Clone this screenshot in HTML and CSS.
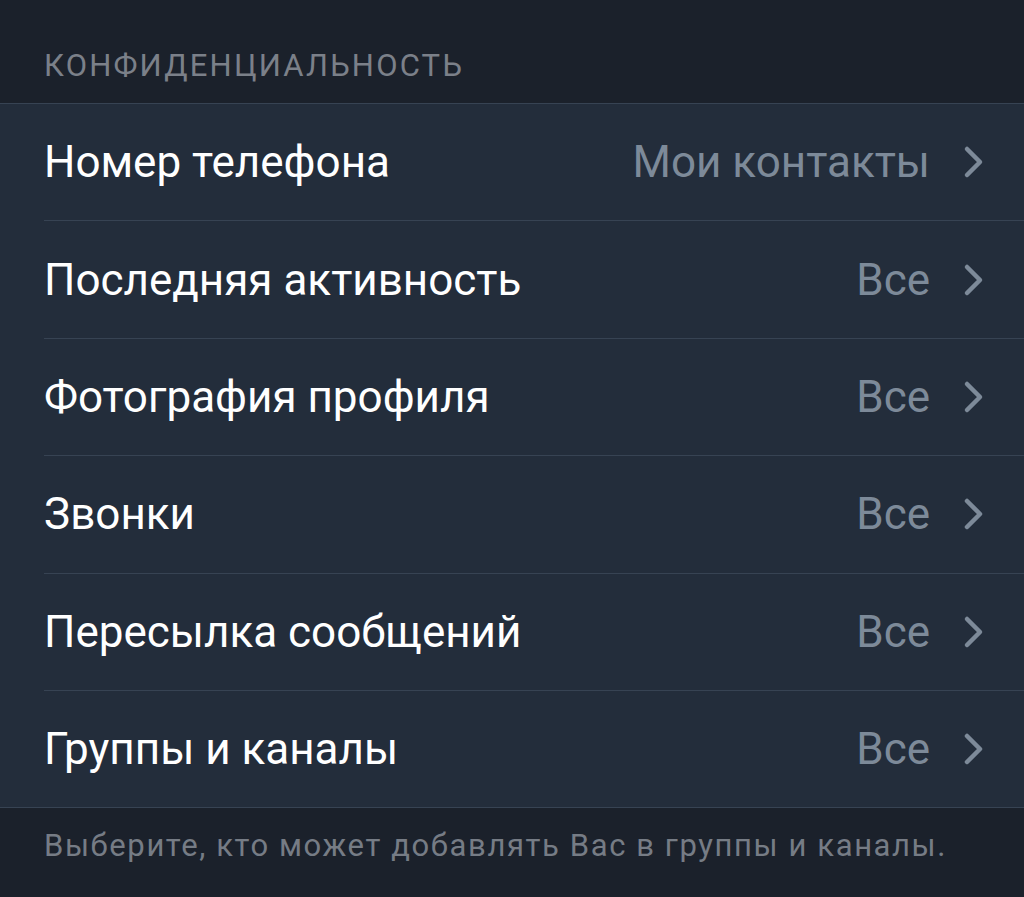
FILE: index.html
```html
<!DOCTYPE html>
<html lang="ru">
<head>
    <meta charset="UTF-8">
    <meta name="viewport" content="width=device-width, initial-scale=1.0">
    <title>Конфиденциальность</title>
    <link rel="stylesheet" href="styles.css">
</head>
<body>
    <div class="section-header">КОНФИДЕНЦИАЛЬНОСТЬ</div>
    <div class="list">
        <div class="row">
            <span class="title">Номер телефона</span>
            <span class="value">Мои контакты</span>
            <svg class="chevron" viewBox="0 0 24 34"><path d="M5 4 L18 17 L5 30"/></svg>
        </div>
        <div class="row">
            <span class="title">Последняя активность</span>
            <span class="value">Все</span>
            <svg class="chevron" viewBox="0 0 24 34"><path d="M5 4 L18 17 L5 30"/></svg>
        </div>
        <div class="row">
            <span class="title">Фотография профиля</span>
            <span class="value">Все</span>
            <svg class="chevron" viewBox="0 0 24 34"><path d="M5 4 L18 17 L5 30"/></svg>
        </div>
        <div class="row">
            <span class="title">Звонки</span>
            <span class="value">Все</span>
            <svg class="chevron" viewBox="0 0 24 34"><path d="M5 4 L18 17 L5 30"/></svg>
        </div>
        <div class="row">
            <span class="title">Пересылка сообщений</span>
            <span class="value">Все</span>
            <svg class="chevron" viewBox="0 0 24 34"><path d="M5 4 L18 17 L5 30"/></svg>
        </div>
        <div class="row">
            <span class="title">Группы и каналы</span>
            <span class="value">Все</span>
            <svg class="chevron" viewBox="0 0 24 34"><path d="M5 4 L18 17 L5 30"/></svg>
        </div>
    </div>
    <div class="section-footer">Выберите, кто может добавлять Вас в группы и каналы.</div>
</body>
</html>
```

FILE: styles.css
```css
html, body {
    margin: 0;
    padding: 0;
    background-color: #1b212b;
    font-family: Roboto, "Noto Sans", sans-serif;
}
.section-header {
    height: 104px;
    box-sizing: border-box;
    padding: 47px 0 0 44px;
    font-size: 31px;
    letter-spacing: 2.2px;
    color: #7b8089;
    border-bottom: 1px solid #374353;
}
.list {
    background-color: #232d3b;
    border-bottom: 1px solid #374353;
}
.row {
    display: flex;
    align-items: center;
    height: 116.4px;
    margin-left: 44px;
    padding-right: 38px;
    border-bottom: 1px solid #374353;
}
.row:last-child {
    border-bottom: none;
}
.title {
    flex: 1;
    font-size: 44px;
    color: #ffffff;
}
.value {
    font-size: 44px;
    color: #7d8a99;
}
.chevron {
    width: 24px;
    height: 34px;
    margin-left: 32px;
    fill: none;
    stroke: #7d8a99;
    stroke-width: 4.5;
    stroke-linecap: round;
    stroke-linejoin: round;
}
.section-footer {
    padding: 19px 0 0 44px;
    font-size: 31px;
    letter-spacing: 1.6px;
    color: #767c85;
}
```
